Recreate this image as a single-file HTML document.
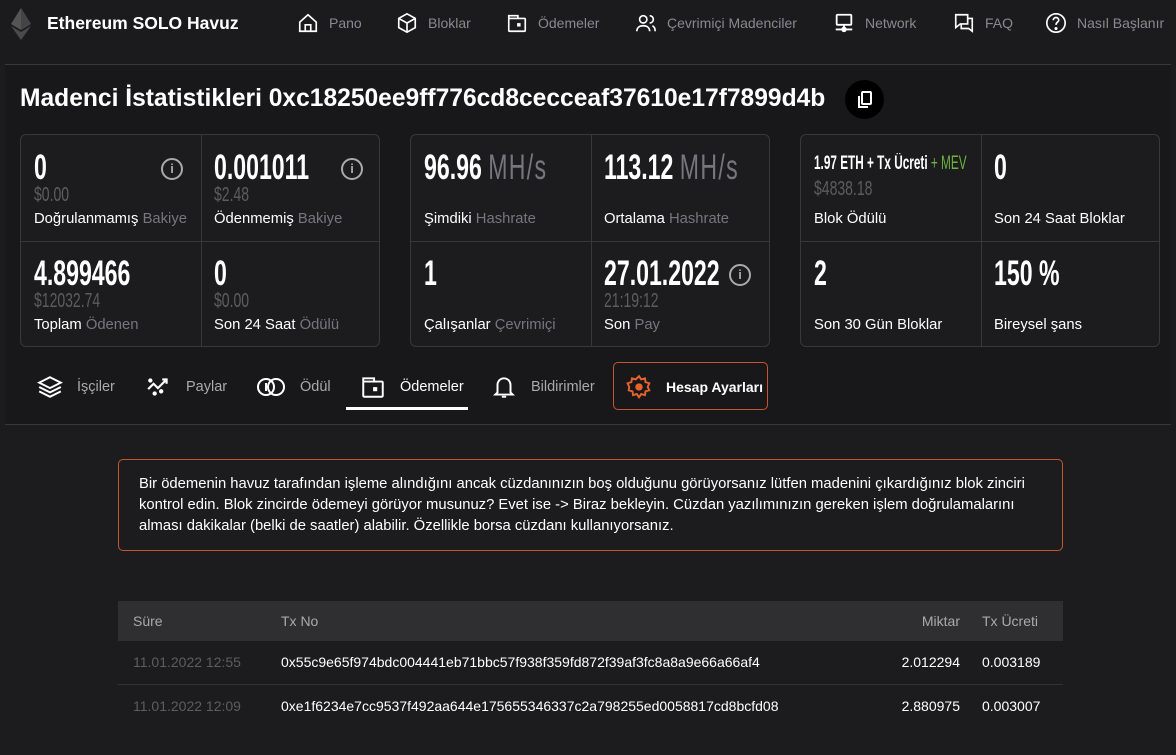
<!DOCTYPE html>
<html><head><meta charset="utf-8"><style>
*{box-sizing:border-box;margin:0;padding:0}
body{width:1176px;height:755px;background:#1c1c1e;font-family:"Liberation Sans",sans-serif;color:#fff;position:relative;overflow:hidden}
.hdr{position:absolute;left:0;top:0;width:1176px;height:64px;background:#1b1b1d}
.brand{position:absolute;left:47px;top:13px;font-size:17.5px;font-weight:bold;color:#fff}
.nav{position:absolute;top:12px;font-size:14px;color:#8a8a8e;display:flex;align-items:center;gap:10px}
.nav svg{width:22px;height:22px}
.panel{position:absolute;left:5px;top:64px;width:1166px;height:361px;background:#18181a;border-top:1px solid #38383a;border-bottom:1px solid #38383a}
h1{position:absolute;left:20px;top:85px;font-size:24.6px;font-weight:bold;color:#fff;white-space:nowrap}
.copy{position:absolute;left:845px;top:80px;width:39px;height:39px;border-radius:50%;background:#000}
.card{position:absolute;top:134px;width:360px;height:213px;border:1px solid #38383a;border-radius:6px;background:#1c1c1e}
.card .v{position:absolute;left:180px;top:0;width:1px;height:100%;background:#38383a}
.card .h{position:absolute;left:0;top:106px;width:100%;height:1px;background:#38383a}
.cell{position:absolute;width:180px;height:106px;padding:13px 13px}
.num{display:inline-block;font-size:35px;font-weight:bold;transform:scaleX(.66);transform-origin:left;white-space:nowrap;height:38px;line-height:40px}
.num .u{color:#77777b;font-weight:normal;letter-spacing:2px}
.usd{display:block;font-size:20px;color:#5d5d60;transform:scaleX(.7);transform-origin:left;white-space:nowrap;height:20px;margin-top:-2px}
.lbl{position:absolute;left:13px;bottom:14px;font-size:14.8px;color:#fff;white-space:nowrap}
.lbl span{color:#77777b}
.info{position:absolute;right:18px;top:23px;width:22px;height:22px;border:2.5px solid #aaa;border-radius:50%;color:#aaa;font-size:13px;font-weight:bold;text-align:center;line-height:17px}
.tab{position:absolute;top:374px;font-size:14.5px;color:#aaa;display:flex;align-items:center;gap:14px}
.tab svg{width:26px;height:26px}
.alert{position:absolute;left:118px;top:459px;width:945px;height:92px;border:1px solid #c8542e;border-radius:5px;padding:14px 20px;font-size:14.8px;line-height:21px;color:#fff}
table{position:absolute;left:118px;top:601px;width:945px;border-collapse:collapse;font-size:14px}
th{background:#2f2f31;color:#aaa;font-weight:normal;height:40px;text-align:left}
td{height:43px;border-bottom:1px solid #333}
tr:last-child td{border-bottom:none}
th:first-child,td:first-child{padding-left:15px}
td:first-child{color:#5d5d60}
.r{text-align:right}
</style></head><body>
<div class="hdr">
<svg style="position:absolute;left:11px;top:8px" width="20" height="32" viewBox="0 0 20 32"><path d="M10 0L0 16l10 6 10-6z" fill="#555"/><path d="M10 0v22l10-6z" fill="#444"/><path d="M0 18l10 14 10-14-10 6z" fill="#4a4a4a"/></svg>
<div class="brand">Ethereum SOLO Havuz</div>
<div class="nav" style="left:297px"><svg viewBox="0 0 24 24" fill="none" stroke="#fff" stroke-width="1.8"><path d="M3 11l9-8 9 8v10H3z"/><path d="M9 21v-7h6v7"/></svg>Pano</div>
<div class="nav" style="left:396px"><svg viewBox="0 0 24 24" fill="none" stroke="#fff" stroke-width="1.8"><path d="M12 2l9 5v10l-9 5-9-5V7z"/><path d="M3 7l9 5 9-5M12 12v10"/></svg>Bloklar</div>
<div class="nav" style="left:506px"><svg viewBox="0 0 24 24" fill="none" stroke="#fff" stroke-width="1.8"><rect x="3" y="7" width="18" height="14" rx="1"/><path d="M3 7V4h10v3"/><rect x="13" y="13" width="2" height="2" fill="#fff"/></svg>Ödemeler</div>
<div class="nav" style="left:635px"><svg viewBox="0 0 24 24" fill="none" stroke="#fff" stroke-width="1.8"><circle cx="9" cy="8" r="4"/><path d="M2 21c0-4 3-6 7-6s7 2 7 6M16 4a4 4 0 010 8M19 15c2 1 3 3 3 6"/></svg>Çevrimiçi Madenciler</div>
<div class="nav" style="left:833px"><svg viewBox="0 0 24 24" fill="none" stroke="#fff" stroke-width="2"><rect x="4" y="3" width="16" height="11" rx="1"/><path d="M12 14v4M3 19h18"/><circle cx="12" cy="19" r="2" fill="#fff"/></svg>Network</div>
<div class="nav" style="left:953px"><svg viewBox="0 0 24 24" fill="none" stroke="#fff" stroke-width="1.8"><path d="M3 3h13v10H8l-5 4z"/><path d="M16 7h5v14l-4-3H9v-5"/></svg>FAQ</div>
<div class="nav" style="left:1045px"><svg viewBox="0 0 24 24" fill="none" stroke="#fff" stroke-width="1.8"><circle cx="12" cy="12" r="10"/><path d="M9 9a3 3 0 116 0c0 2-3 2-3 5"/><circle cx="12" cy="18" r=".8" fill="#fff"/></svg>Nasıl Başlanır</div>
</div>
<div class="panel"></div>
<h1>Madenci İstatistikleri 0xc18250ee9ff776cd8cecceaf37610e17f7899d4b</h1>
<div class="copy"><svg style="position:absolute;left:12px;top:11px" width="16" height="18" viewBox="0 0 16 18" fill="none" stroke="#fff" stroke-width="2"><rect x="5" y="1" width="9" height="12" rx="1"/><path d="M2 5v11h9"/></svg></div>

<div class="card" style="left:20px"><div class="v"></div><div class="h"></div>
<div class="cell" style="left:0;top:0"><span class="num">0</span><span class="usd">$0.00</span><div class="lbl">Doğrulanmamış <span>Bakiye</span></div><div class="info">i</div></div>
<div class="cell" style="left:180px;top:0"><span class="num">0.001011</span><span class="usd">$2.48</span><div class="lbl">Ödenmemiş <span>Bakiye</span></div><div class="info">i</div></div>
<div class="cell" style="left:0;top:106px"><span class="num">4.899466</span><span class="usd">$12032.74</span><div class="lbl">Toplam <span>Ödenen</span></div></div>
<div class="cell" style="left:180px;top:106px"><span class="num">0</span><span class="usd">$0.00</span><div class="lbl">Son 24 Saat <span>Ödülü</span></div></div>
</div>
<div class="card" style="left:410px"><div class="v"></div><div class="h"></div>
<div class="cell" style="left:0;top:0"><span class="num">96.96 <span class="u">MH/s</span></span><div class="lbl">Şimdiki <span>Hashrate</span></div></div>
<div class="cell" style="left:180px;top:0"><span class="num">113.12 <span class="u">MH/s</span></span><div class="lbl">Ortalama <span>Hashrate</span></div></div>
<div class="cell" style="left:0;top:106px"><span class="num">1</span><div class="lbl">Çalışanlar <span>Çevrimiçi</span></div></div>
<div class="cell" style="left:180px;top:106px"><span class="num">27.01.2022</span><span class="usd">21:19:12</span><div class="lbl">Son <span>Pay</span></div><div class="info" style="right:20px">i</div></div>
</div>
<div class="card" style="left:800px"><div class="v"></div><div class="h"></div>
<div class="cell" style="left:0;top:0"><span class="num" style="font-size:19px;height:24px;line-height:24px;margin-top:4px;transform:scaleX(.62)">1.97 ETH + Tx Ücreti <span style="color:#6cb33f;font-weight:normal">+ MEV</span></span><span class="usd" style="margin-top:2px">$4838.18</span><div class="lbl">Blok Ödülü</div></div>
<div class="cell" style="left:180px;top:0"><span class="num">0</span><div class="lbl">Son 24 Saat Bloklar</div></div>
<div class="cell" style="left:0;top:106px"><span class="num">2</span><div class="lbl">Son 30 Gün Bloklar</div></div>
<div class="cell" style="left:180px;top:106px"><span class="num">150 %</span><div class="lbl">Bireysel şans</div></div>
</div>

<div class="tab" style="left:37px"><svg viewBox="0 0 24 24" fill="none" stroke="#fff" stroke-width="1.8"><path d="M12 3l10 5-10 5L2 8z"/><path d="M2 12l10 5 10-5M2 16l10 5 10-5"/></svg>İşçiler</div>
<div class="tab" style="left:146px"><svg viewBox="0 0 24 24" fill="none" stroke="#fff" stroke-width="2"><path d="M2 14l5-5 4 4 7-7M15 5h4v4"/><circle cx="4" cy="6" r="1" fill="#fff"/><circle cx="8" cy="18" r="1" fill="#fff"/><circle cx="14" cy="16" r="1" fill="#fff"/></svg>Paylar</div>
<div class="tab" style="left:256px"><svg viewBox="0 0 30 24" style="width:30px" fill="none" stroke="#fff" stroke-width="2"><circle cx="10" cy="12" r="8"/><circle cx="20" cy="12" r="8"/><path d="M10 8v8"/></svg>Ödül</div>
<div class="tab" style="left:360px;color:#fff"><svg viewBox="0 0 24 24" fill="none" stroke="#fff" stroke-width="1.8"><rect x="3" y="7" width="18" height="14" rx="1"/><path d="M3 7V4h10v3"/><rect x="13" y="13" width="2" height="2" fill="#fff"/></svg>Ödemeler</div>
<div style="position:absolute;left:346px;top:407px;width:122px;height:3px;background:#fff"></div>
<div class="tab" style="left:491px"><svg viewBox="0 0 24 24" fill="none" stroke="#fff" stroke-width="1.8"><path d="M6 17V10a6 6 0 0112 0v7l2 2H4z"/><path d="M10 21h4"/></svg>Bildirimler</div>
<div style="position:absolute;left:613px;top:362px;width:155px;height:48px;border:1px solid #c8542e;border-radius:5px"></div>
<div class="tab" style="left:626px;color:#fff;font-weight:bold;font-size:14px"><svg viewBox="0 0 24 24" fill="none" stroke="#e8632b" stroke-width="1.8"><path d="M12 2l2 3 3.5-1 .5 3.5 3.5 1-1.5 3.5 1.5 3-3.5 1-.5 3.5-3.5-1-2 3-2-3-3.5 1-.5-3.5-3.5-1L3 12 1.5 8.5 5 7.5 5.5 4 9 5z"/><circle cx="12" cy="12" r="2.5" fill="#e8632b"/></svg>Hesap Ayarları</div>

<div class="alert">Bir ödemenin havuz tarafından işleme alındığını ancak cüzdanınızın boş olduğunu görüyorsanız lütfen madenini çıkardığınız blok zinciri kontrol edin. Blok zincirde ödemeyi görüyor musunuz? Evet ise -&gt; Biraz bekleyin. Cüzdan yazılımınızın gereken işlem doğrulamalarını alması dakikalar (belki de saatler) alabilir. Özellikle borsa cüzdanı kullanıyorsanız.</div>

<table>
<tr><th style="width:163px">Süre</th><th>Tx No</th><th class="r" style="width:100px">Miktar</th><th style="width:103px;padding-left:22px">Tx Ücreti</th></tr>
<tr><td>11.01.2022 12:55</td><td>0x55c9e65f974bdc004441eb71bbc57f938f359fd872f39af3fc8a8a9e66a66af4</td><td class="r">2.012294</td><td style="padding-left:22px">0.003189</td></tr>
<tr><td>11.01.2022 12:09</td><td>0xe1f6234e7cc9537f492aa644e175655346337c2a798255ed0058817cd8bcfd08</td><td class="r">2.880975</td><td style="padding-left:22px">0.003007</td></tr>
</table>
</body></html>
